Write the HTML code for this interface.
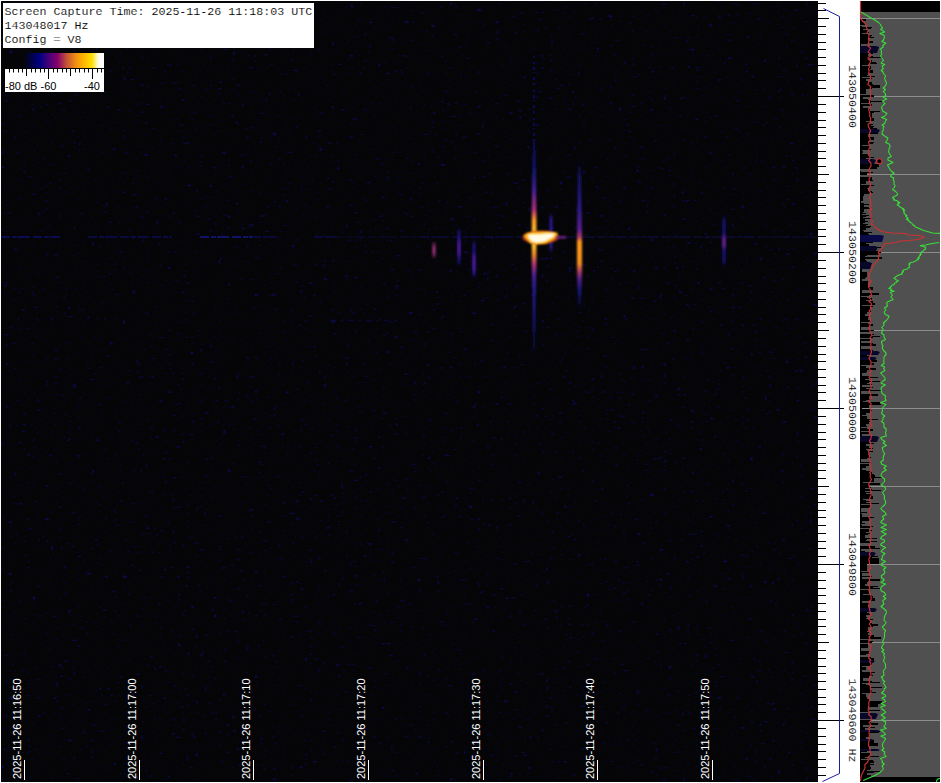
<!DOCTYPE html>
<html><head><meta charset="utf-8"><title>Spectrum capture</title>
<style>
html,body{margin:0;padding:0;background:#fff;overflow:hidden}
svg{display:block}
text{font-family:"Liberation Sans",sans-serif}
.m{font-family:"Liberation Mono",monospace}
</style></head><body>
<svg width="941" height="783" viewBox="0 0 941 783">
<defs>
<linearGradient id="lg" x1="0" x2="1" y1="0" y2="0">
<stop offset="0" stop-color="#050506"/><stop offset="0.19" stop-color="#050508"/>
<stop offset="0.28" stop-color="#000050"/><stop offset="0.35" stop-color="#000080"/>
<stop offset="0.45" stop-color="#4a0078"/><stop offset="0.53" stop-color="#85006c"/>
<stop offset="0.62" stop-color="#c05038"/><stop offset="0.72" stop-color="#f59010"/>
<stop offset="0.80" stop-color="#ffb800"/><stop offset="0.88" stop-color="#ffe000"/>
<stop offset="0.93" stop-color="#fff8c0"/><stop offset="0.96" stop-color="#ffffff"/><stop offset="1" stop-color="#ffffff"/>
</linearGradient>
<filter id="b1u" filterUnits="userSpaceOnUse" x="0" y="220" width="941" height="40"><feGaussianBlur stdDeviation="0.6"/></filter>
<filter id="b1v" filterUnits="userSpaceOnUse" x="520" y="50" width="30" height="110"><feGaussianBlur stdDeviation="0.7"/></filter>
<filter id="b1w" filterUnits="userSpaceOnUse" x="320" y="310" width="100" height="20"><feGaussianBlur stdDeviation="0.7"/></filter>
<filter id="b1" x="-50%" y="-50%" width="200%" height="200%"><feGaussianBlur stdDeviation="0.9"/></filter>
<filter id="b2" x="-100%" y="-20%" width="300%" height="140%"><feGaussianBlur stdDeviation="0.9 2.5"/></filter>
<filter id="b3" x="-50%" y="-50%" width="200%" height="200%"><feGaussianBlur stdDeviation="1.2"/></filter>
<filter id="sp" x="0" y="0" width="100%" height="100%" color-interpolation-filters="sRGB">
<feTurbulence type="fractalNoise" baseFrequency="0.22 0.33" numOctaves="2" seed="11" result="n"/>
<feColorMatrix in="n" type="matrix" values="0 0 0 0 0.04  0 0 0 0 0.04  0 0 0 0 0.30  3 3 0 0 -3.68"/>
<feGaussianBlur stdDeviation="0.6"/>
</filter>
<linearGradient id="v1" x1="0" x2="0" y1="0" y2="1">
<stop offset="0" stop-color="#101068" stop-opacity="0.7"/><stop offset="0.15" stop-color="#1a1a88" stop-opacity="0.95"/>
<stop offset="0.24" stop-color="#4a209a"/><stop offset="0.33" stop-color="#b03078"/>
<stop offset="0.38" stop-color="#ffa020"/><stop offset="0.44" stop-color="#ffc030"/><stop offset="0.50" stop-color="#ffc030"/>
<stop offset="0.54" stop-color="#f08828"/><stop offset="0.59" stop-color="#a83078"/><stop offset="0.64" stop-color="#4a209a"/><stop offset="0.70" stop-color="#2a1c98"/>
<stop offset="0.85" stop-color="#1a1a88" stop-opacity="0.9"/><stop offset="1" stop-color="#101068" stop-opacity="0.3"/>
</linearGradient>
<linearGradient id="v2" x1="0" x2="0" y1="0" y2="1">
<stop offset="0" stop-color="#101070" stop-opacity="0"/><stop offset="0.1" stop-color="#16167a" stop-opacity="0.8"/>
<stop offset="0.3" stop-color="#2a1a88"/><stop offset="0.46" stop-color="#5a2090"/><stop offset="0.51" stop-color="#b04060"/><stop offset="0.54" stop-color="#ff9a18"/><stop offset="0.68" stop-color="#f59020"/>
<stop offset="0.73" stop-color="#b04060"/><stop offset="0.78" stop-color="#5a208a"/><stop offset="0.86" stop-color="#1a1a88" stop-opacity="0.85"/><stop offset="1" stop-color="#101070" stop-opacity="0"/>
</linearGradient>
<clipPath id="cp"><rect x="860" y="1" width="80" height="781"/></clipPath>
</defs>

<rect x="0" y="0" width="941" height="783" fill="#fff"/>
<rect x="1" y="1" width="817" height="781" fill="#050508"/>
<rect x="1" y="1" width="817" height="781" filter="url(#sp)"/>
<line x1="1" y1="237" x2="60" y2="237" stroke="#16168a" stroke-width="1.6" stroke-dasharray="9 2 5 1 12 3" opacity="0.75" filter="url(#b1u)"/>
<line x1="88" y1="237" x2="172" y2="237" stroke="#14147a" stroke-width="1.6" stroke-dasharray="9 2 5 1 12 3" opacity="0.7" filter="url(#b1u)"/>
<line x1="200" y1="237" x2="252" y2="237" stroke="#1c1ca0" stroke-width="1.6" stroke-dasharray="9 2 5 1 12 3" opacity="0.85" filter="url(#b1u)"/>
<line x1="252" y1="237" x2="276" y2="237" stroke="#14147a" stroke-width="1.6" stroke-dasharray="9 2 5 1 12 3" opacity="0.6" filter="url(#b1u)"/>
<line x1="314" y1="237" x2="336" y2="237" stroke="#14147a" stroke-width="1.6" stroke-dasharray="9 2 5 1 12 3" opacity="0.6" filter="url(#b1u)"/>
<line x1="336" y1="237" x2="420" y2="237" stroke="#0e0e5a" stroke-width="1.6" stroke-dasharray="9 2 5 1 12 3" opacity="0.35" filter="url(#b1u)"/>
<line x1="420" y1="237" x2="522" y2="237" stroke="#12126a" stroke-width="1.6" stroke-dasharray="9 2 5 1 12 3" opacity="0.55" filter="url(#b1u)"/>
<line x1="566" y1="237" x2="760" y2="237" stroke="#101064" stroke-width="1.6" stroke-dasharray="9 2 5 1 12 3" opacity="0.5" filter="url(#b1u)"/>
<line x1="760" y1="237" x2="818" y2="237" stroke="#0e0e5a" stroke-width="1.6" stroke-dasharray="9 2 5 1 12 3" opacity="0.4" filter="url(#b1u)"/>
<line x1="330" y1="320.5" x2="400" y2="320.5" stroke="#0e0e5a" stroke-width="1.5" stroke-dasharray="6 4 3 5" opacity="0.5" filter="url(#b1w)"/>
<line x1="534" y1="62" x2="534" y2="145" stroke="#101068" stroke-width="2.5" stroke-dasharray="2 3 3 2 1 4 3 3 2 5" opacity="0.7" filter="url(#b1v)"/>
<path d="M533,140H535.2L536.4,212V264L535.4,300L535.2,352H533L532.8,300L531.8,264V212Z" fill="url(#v1)" filter="url(#b1)"/>
<path d="M578.2,160H580.6L582,236V270L580.8,312H578.2L577,270V236Z" fill="url(#v2)" filter="url(#b1)"/>
<rect x="432.5" y="244" width="3" height="12" fill="#a03480" opacity="1" filter="url(#b2)"/>
<rect x="457.5" y="230" width="3" height="34" fill="#1c1678" opacity="1" filter="url(#b2)"/>
<rect x="457.5" y="240" width="3" height="16" fill="#4a1c88" opacity="1" filter="url(#b2)"/>
<rect x="472.5" y="242" width="3" height="34" fill="#1c1678" opacity="1" filter="url(#b2)"/>
<rect x="472.5" y="254" width="3" height="18" fill="#4a1c88" opacity="1" filter="url(#b2)"/>
<rect x="549.5" y="216" width="3" height="34" fill="#2a1c90" opacity="1" filter="url(#b2)"/>
<rect x="722.5" y="218" width="3" height="46" fill="#1c1678" opacity="1" filter="url(#b2)"/>
<rect x="722.5" y="236" width="3" height="12" fill="#702480" opacity="1" filter="url(#b2)"/>
<ellipse cx="540.5" cy="237.5" rx="18" ry="6.5" fill="#b03818" filter="url(#b3)"/>
<path d="M523.5,236 L527,233 L536,231.5 L548,231.5 L557,232.5 L558,236 L553,240 L546,243.5 L535,244.5 L530,243 L527,240 Z" fill="#ffb010" filter="url(#b1)"/>
<path d="M527,236 L530,234 L540,234 L548,233 L555,233.5 L554,236.5 L549,239.5 L544,242 L536,243 L531,241.5 L529,238.5 Z" fill="#fffbe6" filter="url(#b1)"/>
<rect x="556" y="236" width="10" height="2.5" fill="#70208a" filter="url(#b1)"/>
<rect x="24" y="760" width="1" height="20" fill="#fff"/>
<text transform="translate(20.5,779) rotate(-90)" font-size="11" fill="#fff">2025-11-26 11:16:50</text>
<rect x="139" y="760" width="1" height="20" fill="#fff"/>
<text transform="translate(135.5,779) rotate(-90)" font-size="11" fill="#fff">2025-11-26 11:17:00</text>
<rect x="253" y="760" width="1" height="20" fill="#fff"/>
<text transform="translate(249.5,779) rotate(-90)" font-size="11" fill="#fff">2025-11-26 11:17:10</text>
<rect x="368" y="760" width="1" height="20" fill="#fff"/>
<text transform="translate(364.5,779) rotate(-90)" font-size="11" fill="#fff">2025-11-26 11:17:20</text>
<rect x="483" y="760" width="1" height="20" fill="#fff"/>
<text transform="translate(479.5,779) rotate(-90)" font-size="11" fill="#fff">2025-11-26 11:17:30</text>
<rect x="597" y="760" width="1" height="20" fill="#fff"/>
<text transform="translate(593.5,779) rotate(-90)" font-size="11" fill="#fff">2025-11-26 11:17:40</text>
<rect x="712" y="760" width="1" height="20" fill="#fff"/>
<text transform="translate(708.5,779) rotate(-90)" font-size="11" fill="#fff">2025-11-26 11:17:50</text>
<rect x="3" y="3" width="311" height="45" fill="#fff"/>
<text class="m" x="4.5" y="15" font-size="11.67" fill="#000" stroke="#fff" stroke-width="0.12" xml:space="preserve">Screen Capture Time: 2025-11-26 11:18:03 UTC</text>
<text class="m" x="4.5" y="29" font-size="11.67" fill="#000" stroke="#fff" stroke-width="0.12" xml:space="preserve">143048017 Hz</text>
<text class="m" x="4.5" y="43" font-size="11.67" fill="#000" stroke="#fff" stroke-width="0.12" xml:space="preserve">Config = V8</text>
<rect x="5" y="53" width="99" height="39" fill="#fff"/>
<rect x="5" y="53" width="99" height="15" fill="url(#lg)"/>
<rect x="5" y="68" width="99" height="1" fill="#000"/>
<rect x="4" y="69" width="1" height="10" fill="#000"/>
<rect x="9" y="69" width="1" height="3.5" fill="#000"/>
<rect x="13" y="69" width="1" height="3.5" fill="#000"/>
<rect x="18" y="69" width="1" height="3.5" fill="#000"/>
<rect x="22" y="69" width="1" height="3.5" fill="#000"/>
<rect x="26" y="69" width="1" height="7" fill="#000"/>
<rect x="31" y="69" width="1" height="3.5" fill="#000"/>
<rect x="35" y="69" width="1" height="3.5" fill="#000"/>
<rect x="40" y="69" width="1" height="3.5" fill="#000"/>
<rect x="44" y="69" width="1" height="3.5" fill="#000"/>
<rect x="48" y="69" width="1" height="10" fill="#000"/>
<rect x="53" y="69" width="1" height="3.5" fill="#000"/>
<rect x="57" y="69" width="1" height="3.5" fill="#000"/>
<rect x="62" y="69" width="1" height="3.5" fill="#000"/>
<rect x="66" y="69" width="1" height="3.5" fill="#000"/>
<rect x="70" y="69" width="1" height="7" fill="#000"/>
<rect x="75" y="69" width="1" height="3.5" fill="#000"/>
<rect x="79" y="69" width="1" height="3.5" fill="#000"/>
<rect x="84" y="69" width="1" height="3.5" fill="#000"/>
<rect x="88" y="69" width="1" height="3.5" fill="#000"/>
<rect x="92" y="69" width="1" height="10" fill="#000"/>
<rect x="97" y="69" width="1" height="3.5" fill="#000"/>
<rect x="101" y="69" width="1" height="3.5" fill="#000"/>
<text x="5" y="89.5" font-size="11" fill="#000">-80 dB</text>
<text x="48.5" y="89.5" font-size="11" fill="#000" text-anchor="middle">-60</text>
<text x="92" y="89.5" font-size="11" fill="#000" text-anchor="middle">-40</text>
<rect x="818" y="1" width="42" height="781" fill="#fff"/>
<rect x="818" y="3" width="8" height="1" fill="#000"/>
<rect x="818" y="10" width="8" height="1" fill="#000"/>
<rect x="818" y="18" width="11" height="1" fill="#000"/>
<rect x="818" y="26" width="8" height="1" fill="#000"/>
<rect x="818" y="34" width="8" height="1" fill="#000"/>
<rect x="818" y="42" width="8" height="1" fill="#000"/>
<rect x="818" y="49" width="8" height="1" fill="#000"/>
<rect x="818" y="57" width="8" height="1" fill="#000"/>
<rect x="818" y="65" width="8" height="1" fill="#000"/>
<rect x="818" y="73" width="8" height="1" fill="#000"/>
<rect x="818" y="80" width="8" height="1" fill="#000"/>
<rect x="818" y="88" width="8" height="1" fill="#000"/>
<rect x="818" y="96" width="26" height="1" fill="#000"/>
<rect x="818" y="104" width="8" height="1" fill="#000"/>
<rect x="818" y="112" width="8" height="1" fill="#000"/>
<rect x="818" y="120" width="8" height="1" fill="#000"/>
<rect x="818" y="127" width="8" height="1" fill="#000"/>
<rect x="818" y="135" width="8" height="1" fill="#000"/>
<rect x="818" y="143" width="8" height="1" fill="#000"/>
<rect x="818" y="151" width="8" height="1" fill="#000"/>
<rect x="818" y="158" width="8" height="1" fill="#000"/>
<rect x="818" y="166" width="8" height="1" fill="#000"/>
<rect x="818" y="174" width="11" height="1" fill="#000"/>
<rect x="818" y="182" width="8" height="1" fill="#000"/>
<rect x="818" y="190" width="8" height="1" fill="#000"/>
<rect x="818" y="197" width="8" height="1" fill="#000"/>
<rect x="818" y="205" width="8" height="1" fill="#000"/>
<rect x="818" y="213" width="8" height="1" fill="#000"/>
<rect x="818" y="221" width="8" height="1" fill="#000"/>
<rect x="818" y="229" width="8" height="1" fill="#000"/>
<rect x="818" y="236" width="8" height="1" fill="#000"/>
<rect x="818" y="244" width="8" height="1" fill="#000"/>
<rect x="818" y="252" width="26" height="1" fill="#000"/>
<rect x="818" y="260" width="8" height="1" fill="#000"/>
<rect x="818" y="268" width="8" height="1" fill="#000"/>
<rect x="818" y="276" width="8" height="1" fill="#000"/>
<rect x="818" y="283" width="8" height="1" fill="#000"/>
<rect x="818" y="291" width="8" height="1" fill="#000"/>
<rect x="818" y="299" width="8" height="1" fill="#000"/>
<rect x="818" y="307" width="8" height="1" fill="#000"/>
<rect x="818" y="314" width="8" height="1" fill="#000"/>
<rect x="818" y="322" width="8" height="1" fill="#000"/>
<rect x="818" y="330" width="11" height="1" fill="#000"/>
<rect x="818" y="338" width="8" height="1" fill="#000"/>
<rect x="818" y="346" width="8" height="1" fill="#000"/>
<rect x="818" y="354" width="8" height="1" fill="#000"/>
<rect x="818" y="361" width="8" height="1" fill="#000"/>
<rect x="818" y="369" width="8" height="1" fill="#000"/>
<rect x="818" y="377" width="8" height="1" fill="#000"/>
<rect x="818" y="385" width="8" height="1" fill="#000"/>
<rect x="818" y="392" width="8" height="1" fill="#000"/>
<rect x="818" y="400" width="8" height="1" fill="#000"/>
<rect x="818" y="408" width="26" height="1" fill="#000"/>
<rect x="818" y="416" width="8" height="1" fill="#000"/>
<rect x="818" y="424" width="8" height="1" fill="#000"/>
<rect x="818" y="432" width="8" height="1" fill="#000"/>
<rect x="818" y="439" width="8" height="1" fill="#000"/>
<rect x="818" y="447" width="8" height="1" fill="#000"/>
<rect x="818" y="455" width="8" height="1" fill="#000"/>
<rect x="818" y="463" width="8" height="1" fill="#000"/>
<rect x="818" y="470" width="8" height="1" fill="#000"/>
<rect x="818" y="478" width="8" height="1" fill="#000"/>
<rect x="818" y="486" width="11" height="1" fill="#000"/>
<rect x="818" y="494" width="8" height="1" fill="#000"/>
<rect x="818" y="502" width="8" height="1" fill="#000"/>
<rect x="818" y="510" width="8" height="1" fill="#000"/>
<rect x="818" y="517" width="8" height="1" fill="#000"/>
<rect x="818" y="525" width="8" height="1" fill="#000"/>
<rect x="818" y="533" width="8" height="1" fill="#000"/>
<rect x="818" y="541" width="8" height="1" fill="#000"/>
<rect x="818" y="548" width="8" height="1" fill="#000"/>
<rect x="818" y="556" width="8" height="1" fill="#000"/>
<rect x="818" y="564" width="26" height="1" fill="#000"/>
<rect x="818" y="572" width="8" height="1" fill="#000"/>
<rect x="818" y="580" width="8" height="1" fill="#000"/>
<rect x="818" y="588" width="8" height="1" fill="#000"/>
<rect x="818" y="595" width="8" height="1" fill="#000"/>
<rect x="818" y="603" width="8" height="1" fill="#000"/>
<rect x="818" y="611" width="8" height="1" fill="#000"/>
<rect x="818" y="619" width="8" height="1" fill="#000"/>
<rect x="818" y="626" width="8" height="1" fill="#000"/>
<rect x="818" y="634" width="8" height="1" fill="#000"/>
<rect x="818" y="642" width="11" height="1" fill="#000"/>
<rect x="818" y="650" width="8" height="1" fill="#000"/>
<rect x="818" y="658" width="8" height="1" fill="#000"/>
<rect x="818" y="666" width="8" height="1" fill="#000"/>
<rect x="818" y="673" width="8" height="1" fill="#000"/>
<rect x="818" y="681" width="8" height="1" fill="#000"/>
<rect x="818" y="689" width="8" height="1" fill="#000"/>
<rect x="818" y="697" width="8" height="1" fill="#000"/>
<rect x="818" y="704" width="8" height="1" fill="#000"/>
<rect x="818" y="712" width="8" height="1" fill="#000"/>
<rect x="818" y="720" width="26" height="1" fill="#000"/>
<rect x="818" y="728" width="8" height="1" fill="#000"/>
<rect x="818" y="736" width="8" height="1" fill="#000"/>
<rect x="818" y="744" width="8" height="1" fill="#000"/>
<rect x="818" y="751" width="8" height="1" fill="#000"/>
<rect x="818" y="759" width="8" height="1" fill="#000"/>
<rect x="818" y="767" width="8" height="1" fill="#000"/>
<rect x="818" y="775" width="8" height="1" fill="#000"/>
<path d="M823.5,8.5 L839.5,16.5 L839.5,773.5 L822.5,781.5" fill="none" stroke="#1c1c9c" stroke-width="1"/>
<text class="m" text-anchor="middle" transform="translate(848.5,96.5) rotate(90)" font-size="11.67" fill="#000" stroke="#fff" stroke-width="0.12" xml:space="preserve">143050400</text>
<text class="m" text-anchor="middle" transform="translate(848.5,252.5) rotate(90)" font-size="11.67" fill="#000" stroke="#fff" stroke-width="0.12" xml:space="preserve">143050200</text>
<text class="m" text-anchor="middle" transform="translate(848.5,408.5) rotate(90)" font-size="11.67" fill="#000" stroke="#fff" stroke-width="0.12" xml:space="preserve">143050000</text>
<text class="m" text-anchor="middle" transform="translate(848.5,564.5) rotate(90)" font-size="11.67" fill="#000" stroke="#fff" stroke-width="0.12" xml:space="preserve">143049800</text>
<text class="m" text-anchor="middle" transform="translate(848.5,720.5) rotate(90)" font-size="11.67" fill="#000" stroke="#fff" stroke-width="0.12" xml:space="preserve">143049600 Hz</text>
<rect x="860" y="1" width="80" height="781" fill="#000"/>
<rect x="860" y="12" width="80" height="765" fill="#505050"/>
<rect x="860" y="18" width="80" height="1" fill="#8c8c8c"/>
<rect x="860" y="96" width="80" height="1" fill="#8c8c8c"/>
<rect x="860" y="174" width="80" height="1" fill="#8c8c8c"/>
<rect x="860" y="252" width="80" height="1" fill="#8c8c8c"/>
<rect x="860" y="330" width="80" height="1" fill="#8c8c8c"/>
<rect x="860" y="408" width="80" height="1" fill="#8c8c8c"/>
<rect x="860" y="486" width="80" height="1" fill="#8c8c8c"/>
<rect x="860" y="564" width="80" height="1" fill="#8c8c8c"/>
<rect x="860" y="642" width="80" height="1" fill="#8c8c8c"/>
<rect x="860" y="720" width="80" height="1" fill="#8c8c8c"/>
<path d="M860,19H866v2H862v1H865v2H865v1H860v1H862v1H872v1H871v1H863v1H868v2H869v1H862v1H868v1H872v1H871v1H874v1H869v2H869v1H873v2H868v1H861v3H870v1H862v3H873v3H868v2H873v1H882v1H869v2H872v2H876v1H877v1H868v1H862v1H871v3H870v1H873v3H868v2H867v1H875v1H862v1H872v1H866v2H868v1H872v2H873v1H880v3H872v1H866v2H866v1H866v2H860v1H874v2H863v2H868v1H871v1H882v1H871v1H861v1H872v2H863v2H868v1H870v2H880v1H874v1H872v3H872v2H874v3H866v1H870v2H873v1H871v1H874v1H873v1H877v1H861v1H868v2H878v2H868v3H874v3H870v1H868v1H874v1H873v1H870v1H862v1H870v3H871v1H862v1H863v2H862v1H869v3H874v1H866v2H868v3H863v1H879v3H877v2H860v2H861v1H873v1H867v2H860v2H872v3H873v1H866v3H861v1H874v1H870v2H867v1H868v2H872v1H873v1H869v1H864v2H863v2H863v3H861v2H864v1H869v1H864v2H869v1H870v1H864v2H864v1H863v1H866v1H862v1H869v1H866v1H863v1H872v1H865v2H868v1H865v1H863v1H868v1H866v1H871v1H870v1H866v2H863v1H864v1H872v1H868v1H869v1H860v2H870v1H867v2H871v1H873v2H866v1H869v2H870v1H881v1H862v1H865v2H881v2H879v2H867v1H865v1H882v2H865v1H866v1H867v2H870v3H861v1H862v1H861v1H862v3H867v2H867v3H866v1H865v1H862v2H868v3H868v3H873v3H862v3H879v2H869v1H861v1H867v1H872v2H866v1H873v2H875v2H862v1H873v1H870v2H871v3H867v2H865v2H869v1H868v2H868v1H871v2H861v1H868v1H873v2H870v1H861v3H874v1H870v1H860v2H874v1H872v1H880v1H873v1H860v1H871v2H861v1H861v1H873v1H876v1H876v1H861v3H871v1H873v1H863v1H870v1H867v3H870v1H872v2H873v1H877v2H872v1H874v2H861v1H866v2H876v2H867v2H866v1H862v3H870v1H878v1H870v1H865v1H869v1H880v1H869v1H867v1H872v1H862v2H873v1H866v1H871v1H881v1H861v3H878v2H869v3H871v1H866v1H863v1H880v2H881v1H869v3H862v1H871v1H872v1H870v1H870v1H866v2H862v1H867v3H878v1H869v1H871v1H869v2H866v2H867v1H861v1H867v1H873v2H861v1H869v1H870v1H862v2H866v1H874v2H861v1H862v1H860v1H869v1H874v1H866v2H869v2H873v1H866v1H867v1H873v1H869v3H869v2H871v1H867v1H861v3H871v1H860v1H869v2H866v2H862v2H866v1H872v3H874v1H875v2H882v1H874v3H874v1H863v1H880v2H869v1H869v1H871v1H865v1H872v1H881v1H865v1H870v1H866v1H872v2H873v3H863v1H866v1H870v1H866v1H879v1H861v1H870v3H861v1H861v3H867v1H861v1H862v3H874v1H870v2H869v1H862v2H865v1H861v1H862v1H873v1H870v1H860v1H869v1H872v1H869v1H866v1H871v1H868v1H865v3H877v1H867v1H866v1H877v1H870v1H860v3H875v2H880v1H861v2H865v1H873v3H866v1H878v1H872v1H879v3H879v3H867v3H867v2H867v2H861v1H869v1H862v3H872v1H862v2H880v2H868v1H867v2H865v2H878v1H873v1H880v1H860v1H869v2H869v2H863v1H872v1H873v2H875v3H862v2H870v1H869v3H869v1H861v3H867v2H869v1H870v1H866v2H867v1H866v1H873v1H870v3H872v1H878v2H873v1H868v3H869v1H867v1H869v1H868v1H868v1H874v2H881v2H860v1H868v1H873v1H872v1H860v1H868v2H868v2H861v3H870v3H866v1H860v2H871v1H874v3H871v2H872v2H870v1H862v1H866v3H862v2H875v1H872v2H873v1H869v2H863v3H872v1H880v1H862v1H866v1H870v2H882v1H870v2H872v2H876v1H862v1H866v2H866v1H867v2H870v2H882v3H878v3H869v1H869v2H880v1H869v1H860v1H870v1H869v1H872v2H860v3H871v3H878v2H863v2H875v1H865v3H880v1H879v1H870v3H870v1H866v1H866v2H874v3H878v3H869v3H867v3H861v1H870v3H879v1H865v1H869v1H861v1H873v1H874v2H870v1H874v1H870v2H871v2H870v1H867v1H880v1H874v1H867v2H871v2H860Z" fill="#000"/>
<path d="M860,46L876,46L879,47L877,53L860,53Z" fill="#07072a"/>
<path d="M860,129L877,129L880,130L878,133L860,133Z" fill="#07072a"/>
<path d="M860,159L873,159L876,160L874,164L860,164Z" fill="#07072a"/>
<path d="M860,235L881,235L884,236L882,242L860,242Z" fill="#0a0a48"/>
<path d="M860,246L875,246L878,247L876,251L860,251Z" fill="#07072a"/>
<path d="M860,262L869,262L872,263L870,269L860,269Z" fill="#07072a"/>
<path d="M860,351L877,351L880,352L878,355L860,355Z" fill="#07072a"/>
<path d="M860,357L874,357L877,358L875,360L860,360Z" fill="#07072a"/>
<path d="M860,436L876,436L879,437L877,442L860,442Z" fill="#07072a"/>
<path d="M860,552L873,552L876,553L874,556L860,556Z" fill="#07072a"/>
<path d="M860,713L875,713L878,714L876,719L860,719Z" fill="#07072a"/>
<path d="M860,730L877,730L880,731L878,732L860,732Z" fill="#07072a"/>
<path d="M860,749L877,749L880,750L878,751L860,751Z" fill="#07072a"/>
<path d="M860,739L871,739L874,740L872,741L860,741Z" fill="#07072a"/>
<path d="M860,608L874,608L877,609L875,612L860,612Z" fill="#07072a"/>
<path d="M860,660L872,660L875,661L873,663L860,663Z" fill="#07072a"/>
<polyline points="860.5,1.0 860.5,3.0 860.5,5.5 860.5,7.5 860.5,10.5 860.5,13.5 860.5,16.5 860.5,18.0 861.7,20.0 864.7,23.0 866.1,25.0 866.5,28.0 868.4,30.5 867.1,32.5 869.0,35.0 868.9,37.0 868.4,39.0 869.0,41.0 868.4,43.0 867.9,46.0 870.6,48.0 869.4,50.0 868.0,52.0 870.6,54.0 870.7,56.0 868.1,57.5 868.2,59.0 870.7,61.0 869.9,63.0 868.5,65.5 869.7,67.0 868.5,68.5 869.1,71.0 868.9,72.5 869.9,75.0 870.9,78.0 869.2,80.0 868.6,82.0 867.8,84.5 870.7,86.5 870.1,89.0 870.2,92.0 870.6,94.5 870.6,97.5 869.9,99.5 869.3,102.0 869.9,104.0 870.8,105.5 870.4,107.5 868.7,109.5 869.4,112.0 869.9,113.5 869.6,116.0 870.8,118.0 870.4,120.0 870.6,122.5 868.0,124.0 868.6,127.0 869.6,129.0 870.6,130.5 869.6,133.0 869.5,135.5 869.6,137.5 870.3,140.0 868.6,142.5 869.2,144.5 870.2,146.0 869.0,149.0 868.7,150.5 869.2,153.0 868.1,154.5 869.9,157.0 869.8,159.0 868.6,160.5 870.9,163.0 871.0,166.0 869.4,168.5 868.3,170.5 870.5,172.0 869.4,174.0 870.2,177.0 869.0,179.0 869.4,181.5 870.3,183.5 870.4,185.5 869.0,188.0 868.8,190.0 870.5,192.5 870.9,195.0 869.2,197.5 870.5,199.5 870.3,201.5 870.5,204.0 871.1,205.5 869.4,207.5 871.5,209.5 868.9,211.0 871.4,214.0 870.2,216.0 871.0,218.0 871.4,219.5 872.7,221.5 871.2,223.5 871.1,224.0 872.8,224.5 873.2,225.0 873.6,225.5 874.0,226.0 874.4,226.5 874.8,227.0 875.2,227.5 875.9,228.0 876.7,228.5 877.5,229.0 878.3,229.5 879.1,230.0 879.9,230.5 880.9,231.0 882.9,231.5 884.8,232.0 886.8,232.5 894.0,233.0 906.1,233.5 906.5,234.0 907.0,234.5 907.4,235.0 919.6,235.5 921.0,236.0 922.4,236.5 923.8,237.0 924.0,237.5 922.5,238.0 921.1,238.5 919.6,239.0 917.0,239.5 913.7,240.0 909.1,240.5 899.7,241.0 898.5,241.5 897.4,242.0 896.2,242.5 891.1,243.0 886.1,243.5 885.3,244.0 884.5,244.5 883.7,245.0 883.4,245.5 883.2,246.0 882.9,246.5 882.7,247.0 882.4,247.5 882.2,248.0 881.9,248.5 881.6,249.0 881.2,249.5 879.7,250.0 879.7,250.5 881.0,251.0 879.3,251.5 878.3,252.0 879.2,254.5 878.2,256.5 878.5,259.5 876.5,261.0 874.9,264.0 872.1,266.0 872.2,268.0 871.4,270.5 870.3,272.0 868.9,274.0 869.3,276.0 868.8,279.0 871.1,281.5 868.3,284.0 869.5,286.0 868.7,287.5 870.3,289.5 870.5,292.5 871.6,294.5 870.2,296.5 869.5,298.0 870.9,300.0 868.9,301.5 871.1,303.0 871.5,305.0 870.5,306.5 871.3,309.0 869.0,311.0 870.9,313.5 869.1,315.5 869.9,317.5 870.6,320.5 869.7,322.5 870.2,324.5 869.0,327.5 869.8,329.5 870.1,332.0 872.0,335.0 869.9,338.0 870.9,340.0 869.8,341.5 871.1,343.5 870.7,345.5 871.3,347.0 870.1,348.5 871.6,351.5 870.6,354.5 869.7,357.0 868.9,358.5 870.7,361.0 871.3,362.5 870.7,365.5 869.2,368.5 871.5,371.5 869.4,373.0 870.7,375.5 869.0,377.5 871.5,379.5 871.2,382.0 869.9,383.5 871.2,385.5 871.0,388.5 869.3,390.5 869.7,392.0 870.5,394.5 871.7,397.5 870.3,399.0 868.8,402.0 871.1,403.5 870.5,406.0 870.1,408.5 870.8,410.0 870.5,413.0 870.2,415.0 870.4,417.5 870.7,419.0 871.5,421.0 870.0,422.5 870.8,424.0 871.8,425.5 869.3,427.0 869.0,428.5 869.5,430.0 869.4,433.0 871.5,435.0 871.1,437.0 870.9,439.0 869.5,440.5 870.8,443.5 870.7,446.0 871.5,448.0 870.9,449.5 868.7,451.0 868.8,454.0 869.5,456.0 869.1,459.0 870.5,461.5 869.7,463.5 870.8,466.5 870.7,469.0 871.6,471.0 869.7,472.5 870.5,474.5 870.0,477.0 871.5,479.5 869.6,482.5 868.7,484.5 869.5,487.5 870.8,490.5 871.1,492.0 871.1,495.0 869.8,498.0 869.7,500.0 870.4,502.5 871.0,504.5 870.6,506.5 869.3,508.5 868.9,511.0 869.3,512.5 871.0,514.5 868.9,517.5 870.6,520.5 869.5,523.0 870.1,524.5 870.9,527.0 870.9,529.0 869.4,531.0 870.5,532.5 870.6,535.0 870.2,537.0 870.9,538.5 870.1,541.0 870.9,544.0 869.1,545.5 870.0,548.5 871.2,550.5 869.4,553.5 870.2,556.5 869.0,558.5 868.9,560.0 869.5,562.0 869.5,565.0 871.0,568.0 868.4,570.0 869.5,572.5 869.5,574.0 870.8,576.5 869.3,578.5 869.4,580.0 870.2,583.0 868.4,584.5 869.8,587.5 868.9,590.5 869.6,592.5 870.7,595.0 871.3,598.0 870.9,600.0 868.9,602.0 869.4,604.0 868.4,605.5 869.4,608.5 869.8,611.0 871.0,612.5 871.2,615.0 869.0,616.5 868.9,619.5 871.2,621.0 869.4,624.0 870.9,626.5 871.3,628.5 868.7,630.5 871.2,632.5 871.0,634.0 870.8,635.5 869.0,637.0 870.4,640.0 868.3,642.5 869.2,644.5 871.1,646.0 870.0,648.0 870.6,650.5 869.6,652.0 868.9,654.0 869.3,655.5 868.6,658.0 870.7,660.0 869.6,661.5 870.7,663.5 871.1,665.5 868.3,667.5 870.9,670.5 870.6,672.5 871.0,674.0 870.8,676.5 869.5,678.0 869.1,680.0 869.6,682.0 868.5,684.0 870.4,686.0 870.3,688.0 870.9,691.0 870.8,693.5 869.4,695.5 868.5,697.5 869.8,699.5 869.1,701.5 868.8,703.5 869.0,705.0 868.4,707.5 868.2,710.5 869.8,712.5 868.4,714.5 871.1,716.5 871.1,719.0 870.9,721.0 869.2,722.5 870.8,725.0 870.6,726.5 868.4,728.5 869.4,730.0 869.0,733.0 869.4,735.0 868.9,738.0 869.3,740.0 868.6,742.5 868.5,745.5 869.6,747.5 870.2,749.5 869.8,751.5 870.8,753.0 870.2,755.5 867.8,757.5 868.3,760.5 867.4,762.5 864.9,764.5 865.0,767.5 864.6,769.0 863.5,771.0 862.5,773.0 861.5,775.0 860.9,777.5 860.7,779.0 860.5,780.5 860.5,781" fill="none" stroke="#d03030" stroke-width="1.15" stroke-linejoin="round"/>
<polyline points="861.0,12.0 865.2,14.5 868.6,16.5 872.0,18.5 875.5,20.5 878.5,22.5 880.5,24.5 881.1,26.0 882.6,28.0 880.7,29.5 884.7,32.0 879.9,33.5 884.3,35.5 884.3,37.5 883.5,40.0 881.8,41.5 885.8,43.0 882.8,45.5 883.3,47.0 880.3,49.0 881.5,50.5 881.2,52.5 881.7,54.5 880.4,56.0 881.9,58.0 883.5,60.5 881.0,63.0 884.7,64.5 882.1,66.0 883.4,68.5 881.2,70.5 883.0,72.0 883.8,74.0 885.8,76.0 884.6,78.0 885.2,80.5 886.4,82.5 886.4,84.0 884.9,86.5 883.2,88.0 885.5,89.5 883.3,91.5 885.2,93.5 885.8,95.5 882.9,97.0 886.7,99.0 882.5,101.0 885.0,103.5 883.3,105.0 881.5,107.0 882.3,109.5 882.5,111.0 887.0,113.5 885.0,116.0 881.5,117.5 886.8,119.5 885.1,121.5 885.1,123.0 882.1,125.0 884.0,126.5 883.1,128.0 883.5,130.0 882.2,132.0 882.0,134.0 884.5,136.0 887.9,138.0 886.9,140.5 885.6,142.5 889.1,144.0 890.2,146.0 889.3,148.0 888.9,150.0 888.6,152.0 889.8,154.0 891.3,156.5 888.0,158.0 887.9,160.0 892.9,162.5 887.5,165.0 888.6,167.0 889.8,169.0 891.2,171.0 894.1,173.0 891.1,175.0 890.7,176.5 893.8,178.0 893.3,180.0 894.2,181.5 893.9,184.0 895.1,185.5 894.3,187.5 892.5,189.5 895.7,191.5 897.4,193.5 897.3,195.0 892.5,197.5 894.6,199.5 893.5,200.0 896.5,200.5 897.6,201.0 897.5,201.5 898.8,202.0 899.8,202.5 897.9,203.0 899.2,203.5 897.8,204.0 898.3,204.5 897.1,205.0 898.8,205.5 899.3,206.0 899.2,206.5 900.1,207.0 900.9,207.5 902.0,208.0 902.9,208.5 903.8,209.0 902.6,209.5 904.1,210.0 904.7,210.5 903.5,211.0 903.4,211.5 903.9,212.0 904.5,212.5 903.9,213.0 904.2,213.5 904.3,214.0 905.8,214.5 905.3,215.0 906.9,215.5 906.4,216.0 905.8,216.5 906.2,217.0 907.7,217.5 907.7,218.0 908.0,218.5 906.3,219.0 907.0,219.5 908.8,220.0 908.1,220.5 909.1,221.0 909.1,221.5 910.2,222.0 910.4,222.5 911.7,223.0 912.1,223.5 912.1,224.0 912.9,224.5 912.7,225.0 914.6,225.5 914.9,226.0 914.6,226.5 915.4,227.0 916.8,227.5 918.1,228.0 919.3,228.5 920.3,229.0 921.3,229.5 922.3,230.0 923.8,230.5 925.5,231.0 927.2,231.5 929.0,232.0 930.8,232.5 932.6,233.0 942.0,233.5" fill="none" stroke="#38e038" stroke-width="1.05" clip-path="url(#cp)" stroke-linejoin="round"/>
<polyline points="939.3,242.5 935.8,243.0 932.3,243.5 929.7,244.0 927.6,244.5 925.8,245.0 920.3,245.5 921.1,246.0 923.7,246.5 925.0,247.0 925.6,247.5 925.8,248.0 925.1,248.5 925.2,249.0 925.2,249.5 923.8,250.0 923.7,250.5 923.1,251.0 921.9,251.5 921.8,252.0 920.9,252.5 921.4,253.0 920.4,253.5 920.2,254.0 921.0,254.5 919.8,255.0 920.4,255.5 919.4,256.0 918.9,256.5 919.4,257.0 918.1,257.5 919.3,258.0 918.3,258.5 917.5,259.0 918.4,259.5 916.5,260.0 916.4,260.5 915.4,261.0 914.5,261.5 913.3,262.0 910.9,262.5 909.8,263.0 910.1,263.5 908.7,264.0 909.8,264.5 909.2,265.0 909.0,265.5 909.2,266.0 909.6,266.5 909.2,267.0 909.5,267.5 908.2,268.0 907.9,268.5 907.0,269.0 905.3,269.5 903.7,270.0 902.9,270.5 903.5,271.0 902.4,271.5 903.0,272.0 902.8,272.5 901.6,273.0 901.5,273.5 902.4,274.0 900.2,274.5 898.9,275.0 897.6,275.5 897.0,276.0 896.0,276.5 895.7,277.0 895.1,277.5 893.9,278.0 894.6,278.5 895.1,279.0 895.1,279.5 896.8,280.0 897.7,280.5 898.4,281.0 896.7,281.5 896.3,282.0 896.6,282.5 894.8,283.0 894.6,283.5 894.3,284.0 894.4,284.5 892.4,285.0 891.8,285.5 891.6,286.0 891.0,286.5 890.3,287.0 890.6,287.5 889.2,288.0 888.8,288.5 891.3,289.0 891.2,289.5 891.5,290.0 890.5,290.5 894.2,291.0 890.2,292.5 892.5,295.0 890.8,297.0 893.3,299.5 887.2,302.0 886.7,304.0 887.5,306.0 884.4,308.0 885.9,310.0 884.1,312.0 885.3,314.5 889.0,316.0 888.0,318.5 886.2,320.5 883.5,323.0 884.1,325.0 881.7,327.5 883.2,329.0 882.4,331.0 881.4,333.0 884.0,335.0 884.0,337.0 885.5,339.5 881.5,341.5 881.8,343.5 882.8,346.0 882.3,348.0 883.5,350.5 885.7,352.5 886.2,354.5 884.1,356.5 884.0,359.0 883.7,361.0 884.1,363.5 881.3,365.5 884.6,367.0 883.8,368.5 884.9,370.5 880.7,373.0 882.4,375.0 884.8,377.5 885.2,379.5 882.4,381.5 880.9,383.0 885.3,385.0 881.7,387.0 881.0,389.0 881.3,391.0 882.2,393.5 885.6,396.0 885.1,398.5 886.1,400.5 880.7,402.5 885.9,404.5 884.5,406.0 882.0,408.5 882.6,411.0 881.6,412.5 882.1,414.0 884.8,416.0 882.9,417.5 883.1,419.5 881.4,421.5 883.8,423.0 883.9,425.0 883.9,427.0 886.1,429.0 886.1,431.0 885.5,432.5 885.9,434.5 886.3,436.0 880.7,437.5 881.8,439.5 885.0,441.5 883.0,443.0 886.5,445.5 882.2,447.5 882.6,449.0 883.2,451.5 884.6,453.5 883.6,456.0 883.1,458.0 883.4,460.0 880.8,462.0 881.5,464.0 886.3,466.0 883.8,468.0 886.3,470.0 882.6,472.0 881.1,474.5 881.3,476.5 884.5,479.0 884.7,481.0 883.6,482.5 881.3,485.0 884.7,487.0 885.8,489.0 884.0,491.0 882.5,493.0 883.8,494.5 884.6,496.5 884.1,498.5 885.5,501.0 885.5,503.5 884.6,505.0 882.7,506.5 880.8,508.5 882.3,510.5 884.7,512.0 886.3,514.5 882.4,516.5 883.9,519.0 881.5,521.0 880.8,522.5 886.5,525.0 881.0,527.5 886.4,529.5 881.2,531.5 886.2,534.0 881.6,536.5 880.5,538.5 884.4,540.0 884.4,542.0 881.3,543.5 880.7,545.0 885.5,547.5 882.7,549.5 881.1,551.5 885.0,553.5 882.8,555.5 882.4,557.5 881.3,559.5 885.5,561.5 881.9,563.5 881.1,565.0 885.9,567.5 883.5,569.5 884.9,572.0 884.1,574.0 881.4,575.5 881.5,577.5 884.3,580.0 881.0,582.5 885.6,584.0 881.6,586.5 880.5,588.5 881.4,591.0 884.5,592.5 885.8,595.0 883.1,596.5 885.9,598.5 882.8,600.5 883.2,602.0 883.9,604.0 881.0,606.5 883.6,608.5 886.3,611.0 886.3,613.0 885.4,614.5 884.8,616.0 884.2,618.0 883.9,620.0 886.2,622.5 884.4,625.0 882.3,627.0 883.7,629.0 885.6,630.5 884.6,632.5 884.6,635.0 884.5,637.0 883.8,639.0 882.7,641.5 883.9,643.5 882.1,646.0 881.6,648.0 883.8,650.0 881.8,651.5 884.4,653.5 883.7,655.5 884.8,657.5 883.8,659.5 883.7,661.5 884.9,663.0 885.6,664.5 885.3,666.0 885.7,668.0 884.3,669.5 883.3,671.0 883.8,673.5 883.9,675.5 881.3,677.0 882.9,678.5 882.7,680.0 884.7,681.5 883.3,683.5 884.7,685.0 886.0,687.5 884.2,689.0 883.9,691.0 881.5,693.0 885.3,695.0 885.5,696.5 881.9,698.0 884.8,700.0 885.4,701.5 881.1,703.5 885.3,705.5 880.7,707.0 882.0,709.0 884.7,711.0 885.5,712.5 881.2,715.0 883.4,716.5 885.3,718.0 881.4,720.0 885.7,722.0 885.5,724.5 883.7,726.5 886.2,728.5 880.6,730.0 883.4,732.0 885.7,734.5 880.9,736.0 885.6,738.5 884.7,740.5 882.9,743.0 882.7,744.5 882.4,746.5 884.0,748.5 881.8,750.0 884.9,752.0 884.0,754.0 886.1,756.5 880.5,758.5 882.5,761.0 882.0,762.5 884.3,764.0 882.0,766.0 883.2,768.0 883.0,769.5 881.0,771.5 878.4,773.5 874.9,775.5 871.4,777.0 867.8,778.5 863.2,780.5" fill="none" stroke="#38e038" stroke-width="1.05" clip-path="url(#cp)" stroke-linejoin="round"/>
<circle cx="879.3" cy="161.3" r="2.6" fill="#000" stroke="#d03030" stroke-width="1.15"/>
<path d="M936.5,782 A3.5,3.5 0 0 1 940,778.5" fill="none" stroke="#30e030" stroke-width="1.1"/>
</svg></body></html>
